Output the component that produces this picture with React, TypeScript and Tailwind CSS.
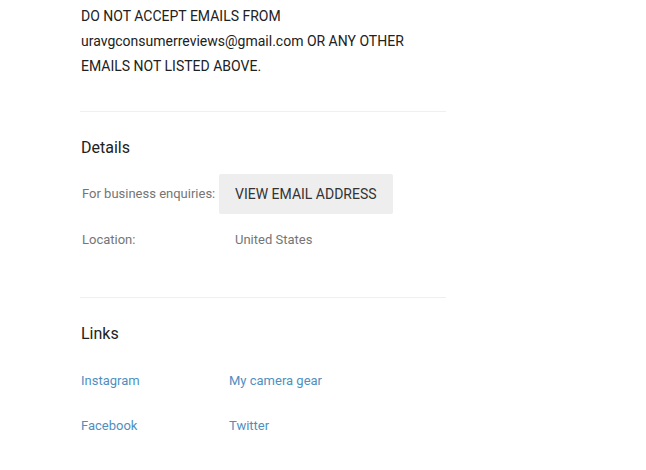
import React from "react";

const font = { fontFamily: "Roboto, 'Liberation Sans', sans-serif" };

function Divider() {
	return <div className="h-px w-[366px] bg-[#efefef]" />;
}

function SectionTitle({ children }: { children: React.ReactNode }) {
	return <h2 className="text-[16px] leading-[24px] text-[#212121]">{children}</h2>;
}

const links = [
	["Instagram", "My camera gear"],
	["Facebook", "Twitter"],
];

export default function App() {
	return (
		<div className="min-h-screen w-full bg-white" style={font}>
			<div className="ml-[80px] flex w-[366px] flex-col pt-[4px]">
				{/* About text tail */}
				<p className="pl-[1px] text-[14px] leading-[25px] text-[#212121]">
					DO NOT ACCEPT EMAILS FROM
					<br />
					uravgconsumerreviews@gmail.com OR ANY OTHER
					<br />
					EMAILS NOT LISTED ABOVE.
				</p>

				<div className="mt-[32px]">
					<Divider />
				</div>

				{/* Details */}
				<div className="mt-[24px] pl-[1px]">
					<SectionTitle>Details</SectionTitle>
				</div>

				<div className="mt-[14px] flex flex-col gap-[16px] text-[13px] leading-[20px]">
					<div className="flex items-center">
						<div className="w-[139px] pl-[2px] text-[#757575]">For business enquiries:</div>
						<button className="h-[40px] rounded-[2px] bg-[#eeeeee] px-[16px] text-[14px] text-[#333333]">
							VIEW EMAIL ADDRESS
						</button>
					</div>
					<div className="flex items-center">
						<div className="w-[139px] pl-[2px] text-[#757575]">Location:</div>
						<div className="pl-[16px] text-[#757575]">United States</div>
					</div>
				</div>

				<div className="mt-[47px]">
					<Divider />
				</div>

				{/* Links */}
				<div className="mt-[24px] pl-[1px]">
					<SectionTitle>Links</SectionTitle>
				</div>

				<div className="mt-[25px] flex flex-col gap-[25px] text-[13px] leading-[20px]">
					{links.map((row) => (
						<div className="flex pl-[1px]" key={row[0]}>
							<a className="w-[148px] text-[#4f8fc0]" href="#">
								{row[0]}
							</a>
							<a className="text-[#4f8fc0]" href="#">
								{row[1]}
							</a>
						</div>
					))}
				</div>
			</div>
		</div>
	);
}
